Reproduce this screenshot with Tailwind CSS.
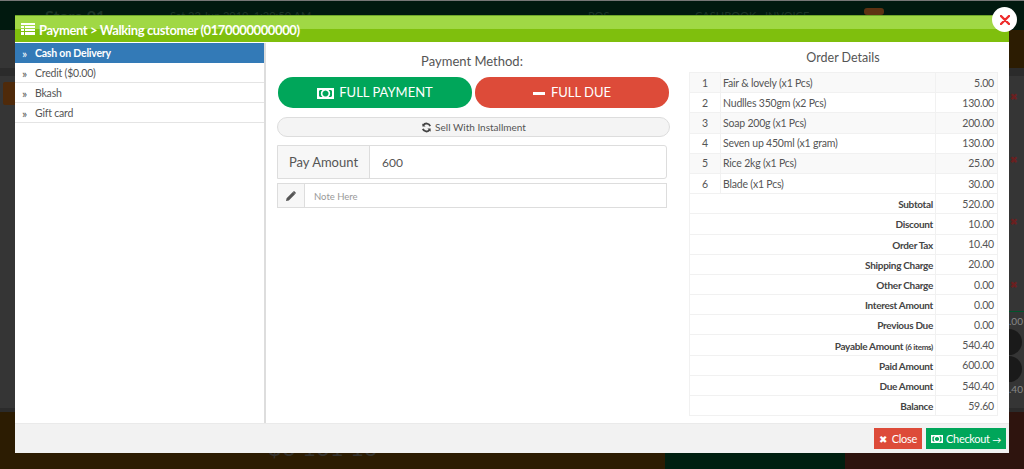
<!DOCTYPE html>
<html lang="en">
<head>
  <meta charset="UTF-8" />
  <title>Payment</title>
  <script src="https://cdn.jsdelivr.net/npm/@tailwindcss/browser@4"></script>
</head>
<body class="bg-[#1c1f1e] font-['Lato',sans-serif] text-[#555]">
  <div class="relative w-[1024px] h-[469px] overflow-hidden">
    <!-- dimmed page behind the modal -->
    <div class="absolute inset-0 flex flex-col bg-[#353535]">
      <div class="h-[1px] bg-[#777]"></div>
      <div class="h-[29px] bg-[#01190f] flex items-start pt-[9px] text-[#1c3428] text-[11px] leading-[12px] pl-[45px]">
        <span class="text-[16px] font-bold w-[125px]">Store 01</span>
        <span class="w-[418px]">Sat 22 Jun 2019, 1:20:50 AM</span>
        <span class="w-[107px]">POS</span>
        <span class="w-[70px]">CASHBOOK</span>
        <span class="w-[99px]">INVOICE</span>
        <span class="w-[20px] h-[7px] -mt-[2px] rounded-[3px] bg-[#5d3212]"></span>
      </div>
      <div class="h-[38px] flex">
        <div class="w-[665px] bg-[#353535]"></div>
        <div class="flex-1 bg-[#2c1c02]"></div>
      </div>
      <div class="h-[8px] bg-[#2b2b2b]"></div>
      <div class="flex-1 flex justify-between">
        <div class="pl-[3px] pt-[6px]">
          <div class="w-[20px] h-[23px] rounded-[2px] bg-[#4f2a0a]"></div>
        </div>
        <div class="w-[15px] flex flex-col text-[9px] leading-[12px] text-[#6a2020] font-bold">
          <span class="block h-[12px] mt-[15px] pl-[1px]">✖</span>
          <span class="block h-[12px] mt-[51px] pl-[1px]">✖</span>
          <span class="block h-[12px] mt-[50px] pl-[1px]">✖</span>
          <span class="block h-[12px] mt-[51px] pl-[1px]">✖</span>
          <div class="h-[1px] mt-[20px] bg-[#00552c]"></div>
          <span class="block h-[12px] mt-[3px] font-normal text-[#888] text-[10px]">.00</span>
          <div class="w-[26px] h-[26px] -ml-[13px] mt-[2px] rounded-full bg-[#1a1a1a]"></div>
          <div class="w-[26px] h-[26px] -ml-[13px] mt-[1px] rounded-full bg-[#1a1a1a]"></div>
          <span class="block h-[12px] mt-[1px] font-normal text-[#888] text-[10px]">.40</span>
        </div>
      </div>
      <div class="h-[4px] bg-[#2b2b2b]"></div>
      <div class="h-[57px] flex">
        <div class="w-[665px] bg-[#2c1c02] pl-[268px] pt-[21px] text-[24px] leading-[28px] text-[#35332e]">$0 101 10</div>
        <div class="w-[180px] bg-[#001f10]"></div>
        <div class="flex-1 bg-[#2e140e]"></div>
      </div>
    </div>

    <!-- modal -->
    <div class="absolute left-[15px] top-[15px] w-[994px] h-[438px] bg-white flex flex-col">
      <div class="h-[27px] flex items-center gap-[4px] px-[6px] text-white text-[13px] leading-[14px] tracking-[-0.4px] font-bold border-t border-[#6ea52a] bg-[linear-gradient(#a0d845_0,#a0d845_48%,#7fbf0d_52%,#7fbf0d_100%)]">
        <svg class="w-[14px] h-[12px]" viewBox="0 0 14 12" fill="currentColor"><path d="M0 0h14v2H0zM0 3h3v2H0zM4 3h10v2H4zM0 6h3v2H0zM4 6h10v2H4zM0 9h3v3H0zM4 9h10v3H4z"/></svg>
        <span class="pt-[1px]">Payment &gt; Walking customer (0170000000000)</span>
      </div>
      <div class="flex flex-1 min-h-0 pt-[1px]">
        <!-- payment methods -->
        <ul class="w-[251px] border-r-2 border-[#ddd] text-[10.500px] tracking-[-0.2px] shrink-0">
          <li class="h-[20px] flex items-center pl-[7px] pt-[2px] bg-[#337ab7] text-white font-bold"><span class="w-[13px] font-normal text-[12px]">»</span>Cash on Delivery</li>
          <li class="h-[20px] flex items-center pl-[7px] pt-[2px] border-b border-[#e4e4e4]"><span class="w-[13px] text-[12px]">»</span>Credit ($0.00)</li>
          <li class="h-[20px] flex items-center pl-[7px] pt-[2px] border-b border-[#e4e4e4]"><span class="w-[13px] text-[12px]">»</span>Bkash</li>
          <li class="h-[20px] flex items-center pl-[7px] pt-[2px] border-b border-[#e4e4e4]"><span class="w-[13px] text-[12px]">»</span>Gift card</li>
        </ul>
        <!-- payment form -->
        <div class="w-[423px] pl-[11px] shrink-0">
          <div class="h-[34px] pt-[9px] text-center w-[390px] text-[13px] leading-[18px]">Payment Method:</div>
          <div class="flex gap-[3px] pl-[1px]">
            <div class="w-[194px] h-[31px] pt-[1px] rounded-[15px] bg-[#00a65a] text-white text-[13px] flex items-center justify-center gap-[5px]">
              <svg class="w-[17px] h-[11px]" viewBox="0 0 17 11" fill="currentColor"><path fill-rule="evenodd" d="M0 0h17v11H0z M3 2 L2 3v5l1 1h2.500A4.500 4.500 0 0 1 5.500 2z M11.500 2A4.500 4.500 0 0 1 11.500 9H14l1-1V3l-1-1z M8.500 2.500a3 3 0 1 0 .01 0z"/></svg>
              FULL PAYMENT
            </div>
            <div class="w-[194px] h-[31px] pt-[1px] rounded-[15px] bg-[#dd4b39] text-white text-[13px] flex items-center justify-center gap-[6px]">
              <span class="w-[12px] h-[3px] bg-white"></span>
              FULL DUE
            </div>
          </div>
          <div class="mt-[9px] w-[393px] h-[20px] rounded-[10px] border border-[#ddd] bg-[#f4f4f4] flex items-center justify-center gap-[3px] text-[10px]">
            <svg class="w-[11px] h-[11px]" viewBox="0 0 24 24" fill="none" stroke="#444" stroke-width="4"><path d="M20 9a8.500 8.500 0 0 0-15-2M4 15a8.500 8.500 0 0 0 15 2"/><path d="M3 3v7h7M21 21v-7h-7" fill="#444" stroke="none"/></svg>
            Sell With Installment
          </div>
          <div class="mt-[8px] h-[34px] w-[390px] flex border border-[#ddd] rounded-r-[3px]">
            <div class="w-[92px] pt-[2px] bg-[#f7f7f7] border-r border-[#ddd] flex items-center justify-center text-[13px]">Pay Amount</div>
            <div class="flex-1 flex items-center pl-[12px] pt-[2px] text-[12px]">600</div>
          </div>
          <div class="mt-[4px] h-[25px] w-[390px] flex border border-[#ddd]">
            <div class="w-[27px] bg-[#f7f7f7] border-r border-[#ddd] flex items-center justify-center">
              <svg class="w-[10px] h-[10px]" viewBox="0 0 10 10" fill="#555"><path d="M0 10l.6-2.800L6.800 1l2.200 2.200L2.800 9.400z M7.400.4q.6-.6 1.200 0l1 1q.6.6 0 1.200L9 3 7 1z"/></svg>
            </div>
            <div class="flex-1 flex items-center pl-[9px] pt-[4px] text-[9.500px] text-[#999]">Note Here</div>
          </div>
        </div>
        <!-- order details -->
        <div class="flex-1 min-w-0">
          <div class="h-[29px] pt-[6px] text-center w-[308px] text-[12.500px] leading-[18px]">Order Details</div>
          <table class="w-[308px] text-[10.500px] tracking-[-0.2px] border-collapse table-fixed [&_td]:pt-[2px]">
            <colgroup><col class="w-[31px]"><col class="w-[215px]"><col class="w-[62px]"></colgroup>
            <tbody>
              <tr class="h-[20.2px] bg-[#f9f9f9] border border-[#f1f1f1]"><td class="text-center">1</td><td class="border-l border-[#f1f1f1] pl-[2px]">Fair &amp; lovely (x1 Pcs)</td><td class="border-l border-[#f1f1f1] text-right pr-[3px]">5.00</td></tr>
              <tr class="h-[20.2px] border border-[#f1f1f1]"><td class="text-center">2</td><td class="border-l border-[#f1f1f1] pl-[2px]">Nudlles 350gm (x2 Pcs)</td><td class="border-l border-[#f1f1f1] text-right pr-[3px]">130.00</td></tr>
              <tr class="h-[20.2px] bg-[#f9f9f9] border border-[#f1f1f1]"><td class="text-center">3</td><td class="border-l border-[#f1f1f1] pl-[2px]">Soap 200g (x1 Pcs)</td><td class="border-l border-[#f1f1f1] text-right pr-[3px]">200.00</td></tr>
              <tr class="h-[20.2px] border border-[#f1f1f1]"><td class="text-center">4</td><td class="border-l border-[#f1f1f1] pl-[2px]">Seven up 450ml (x1 gram)</td><td class="border-l border-[#f1f1f1] text-right pr-[3px]">130.00</td></tr>
              <tr class="h-[20.2px] bg-[#f9f9f9] border border-[#f1f1f1]"><td class="text-center">5</td><td class="border-l border-[#f1f1f1] pl-[2px]">Rice 2kg (x1 Pcs)</td><td class="border-l border-[#f1f1f1] text-right pr-[3px]">25.00</td></tr>
              <tr class="h-[20.2px] border border-[#f1f1f1]"><td class="text-center">6</td><td class="border-l border-[#f1f1f1] pl-[2px]">Blade (x1 Pcs)</td><td class="border-l border-[#f1f1f1] text-right pr-[3px]">30.00</td></tr>
              <tr class="h-[20.2px] border border-[#f1f1f1]"><td colspan="2" class="text-right font-bold text-[#444] pr-[2px] text-[10px] tracking-[-0.3px]">Subtotal</td><td class="border-l border-[#f1f1f1] text-right pr-[3px]">520.00</td></tr>
              <tr class="h-[20.2px] border border-[#f1f1f1]"><td colspan="2" class="text-right font-bold text-[#444] pr-[2px] text-[10px] tracking-[-0.3px]">Discount</td><td class="border-l border-[#f1f1f1] text-right pr-[3px]">10.00</td></tr>
              <tr class="h-[20.2px] border border-[#f1f1f1]"><td colspan="2" class="text-right font-bold text-[#444] pr-[2px] text-[10px] tracking-[-0.3px]">Order Tax</td><td class="border-l border-[#f1f1f1] text-right pr-[3px]">10.40</td></tr>
              <tr class="h-[20.2px] border border-[#f1f1f1]"><td colspan="2" class="text-right font-bold text-[#444] pr-[2px] text-[10px] tracking-[-0.3px]">Shipping Charge</td><td class="border-l border-[#f1f1f1] text-right pr-[3px]">20.00</td></tr>
              <tr class="h-[20.2px] border border-[#f1f1f1]"><td colspan="2" class="text-right font-bold text-[#444] pr-[2px] text-[10px] tracking-[-0.3px]">Other Charge</td><td class="border-l border-[#f1f1f1] text-right pr-[3px]">0.00</td></tr>
              <tr class="h-[20.2px] border border-[#f1f1f1]"><td colspan="2" class="text-right font-bold text-[#444] pr-[2px] text-[10px] tracking-[-0.3px]">Interest Amount</td><td class="border-l border-[#f1f1f1] text-right pr-[3px]">0.00</td></tr>
              <tr class="h-[20.2px] border border-[#f1f1f1]"><td colspan="2" class="text-right font-bold text-[#444] pr-[2px] text-[10px] tracking-[-0.3px]">Previous Due</td><td class="border-l border-[#f1f1f1] text-right pr-[3px]">0.00</td></tr>
              <tr class="h-[20.2px] border border-[#f1f1f1]"><td colspan="2" class="text-right font-bold text-[#444] pr-[2px] text-[10px] tracking-[-0.3px]">Payable Amount <small class="text-[8px]">(6 items)</small></td><td class="border-l border-[#f1f1f1] text-right pr-[3px]">540.40</td></tr>
              <tr class="h-[20.2px] border border-[#f1f1f1]"><td colspan="2" class="text-right font-bold text-[#444] pr-[2px] text-[10px] tracking-[-0.3px]">Paid Amount</td><td class="border-l border-[#f1f1f1] text-right pr-[3px]">600.00</td></tr>
              <tr class="h-[20.2px] border border-[#f1f1f1]"><td colspan="2" class="text-right font-bold text-[#444] pr-[2px] text-[10px] tracking-[-0.3px]">Due Amount</td><td class="border-l border-[#f1f1f1] text-right pr-[3px]">540.40</td></tr>
              <tr class="h-[20.2px] border border-[#f1f1f1]"><td colspan="2" class="text-right font-bold text-[#444] pr-[2px] text-[10px] tracking-[-0.3px]">Balance</td><td class="border-l border-[#f1f1f1] text-right pr-[3px]">59.60</td></tr>
            </tbody>
          </table>
        </div>
      </div>
      <div class="h-[30px] bg-[#f2f2f2] border-t border-[#eaeaea] flex items-center justify-end gap-[4px] pr-[3px] text-[11px] tracking-[-0.3px] text-white whitespace-nowrap">
        <div class="w-[48px] h-[21px] pt-[1px] bg-[#dd4b39] flex items-center justify-center gap-[5px]"><span class="text-[10px]">✖</span>Close</div>
        <div class="w-[80px] h-[21px] pt-[1px] bg-[#00a65a] flex items-center justify-center gap-[3px]">
          <svg class="w-[12px] h-[8px] shrink-0" viewBox="0 0 17 11" fill="currentColor"><path fill-rule="evenodd" d="M0 0h17v11H0z M3 2 L2 3v5l1 1h2.500A4.500 4.500 0 0 1 5.500 2z M11.500 2A4.500 4.500 0 0 1 11.500 9H14l1-1V3l-1-1z M8.500 2.500a3 3 0 1 0 .01 0z"/></svg>
          <span>Checkout <span class="text-[9px]">→</span></span>
        </div>
      </div>
    </div>

    <!-- close button overlaps the modal corner -->
    <div class="absolute left-[992px] top-[7px] w-[25px] h-[25px] rounded-full bg-white flex items-center justify-center">
      <svg class="w-[10px] h-[10px]" viewBox="0 0 10 10" stroke="#ee2b2b" stroke-width="2.400" stroke-linecap="round"><path d="M1 1l8 8M9 1l-8 8"/></svg>
    </div>
  </div>
</body>
</html>
